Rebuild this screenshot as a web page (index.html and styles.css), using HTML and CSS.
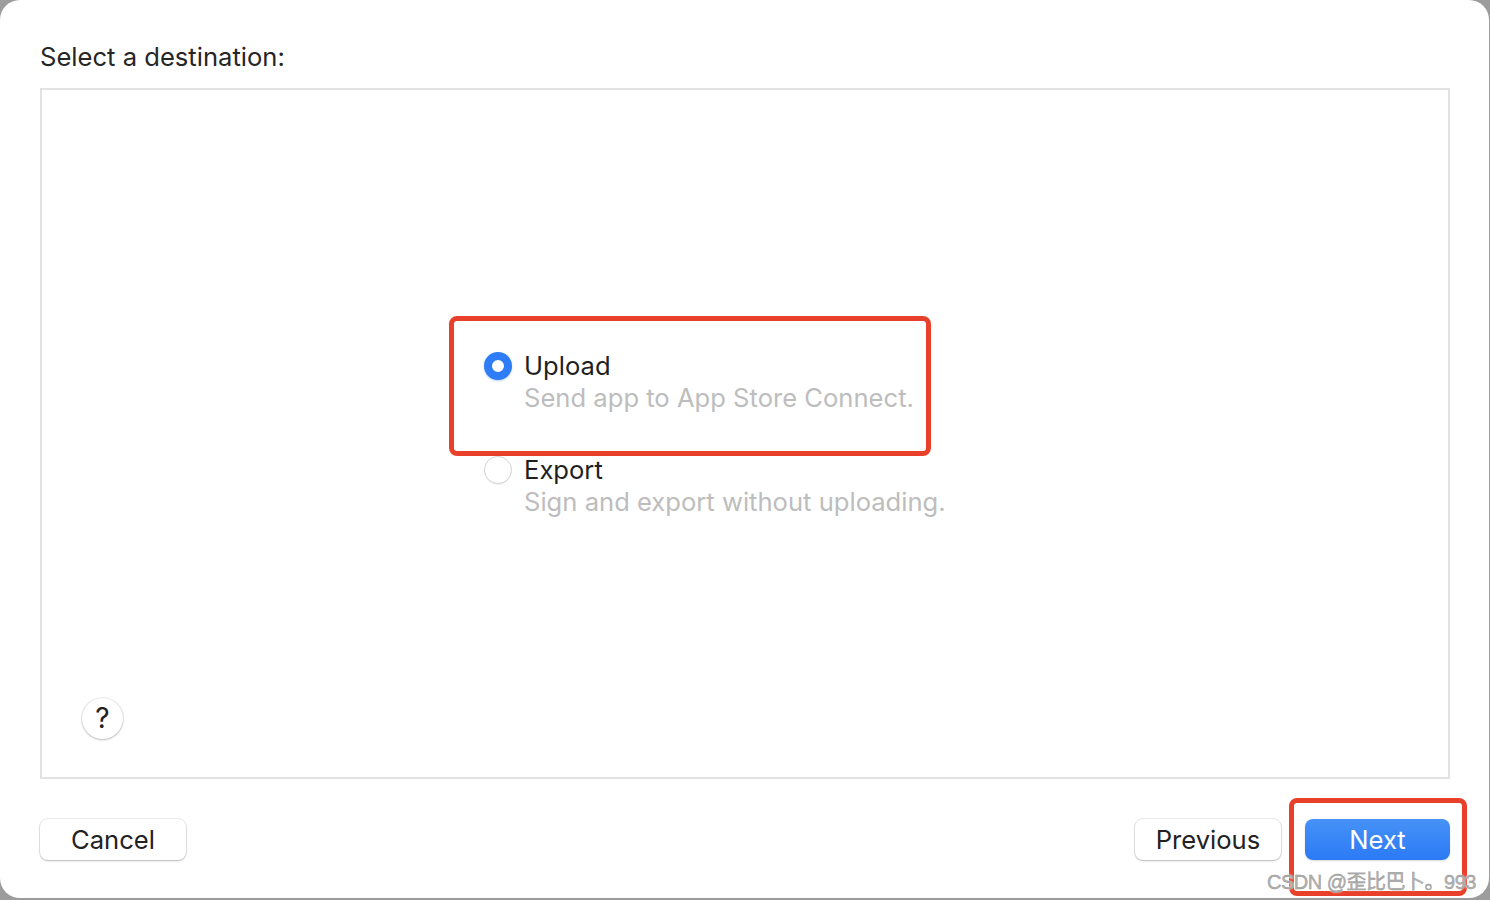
FILE: index.html
```html
<!DOCTYPE html>
<html lang="en">
<head>
<meta charset="utf-8">
<title>Select a destination</title>
<link rel="stylesheet" href="styles.css">
</head>
<body>
<div class="window">
  <h1 class="title">Select a destination:</h1>
  <div class="panel">
    <div class="options">
      <div class="option">
        <span class="radio radio-on"></span>
        <div class="option-text">
          <div class="option-name">Upload</div>
          <div class="option-desc">Send app to App Store Connect.</div>
        </div>
      </div>
      <div class="option">
        <span class="radio"></span>
        <div class="option-text">
          <div class="option-name">Export</div>
          <div class="option-desc">Sign and export without uploading.</div>
        </div>
      </div>
      <div class="mark mark-upload"></div>
    </div>
    <button class="help">?</button>
  </div>
  <div class="footer">
    <button class="btn">Cancel</button>
    <div class="spacer"></div>
    <button class="btn">Previous</button>
    <div class="next-wrap">
      <button class="btn btn-primary">Next</button>
      <div class="mark mark-next"></div>
    </div>
  </div>
  <div class="watermark">CSDN @歪比巴卜。993</div>
</div>
</body>
</html>
```

FILE: styles.css
```css
html, body {
  margin: 0;
  padding: 0;
}
body {
  width: 1490px;
  height: 900px;
  background: #9c9c9c;
  font-family: Inter, "Noto Sans", "Noto Sans CJK SC", sans-serif;
  overflow: hidden;
}
.window {
  position: relative;
  box-sizing: border-box;
  width: 1489px;
  height: 898px;
  background: #ffffff;
  border-radius: 20px;
  padding: 0 40px 0 40px;
  display: flex;
  flex-direction: column;
}
.title {
  margin: 42px 0 0 0;
  height: 46px;
  font-size: 25.6px;
  font-weight: 400;
  color: #262626;
  line-height: 30px;
}
.panel {
  box-sizing: border-box;
  width: 1410px;
  height: 691px;
  border: 2px solid #e2e2e2;
  display: grid;
  grid-template-rows: 1fr auto 1fr;
}
.options {
  grid-row: 2;
  position: relative;
  margin-left: 442px;
  display: flex;
  flex-direction: column;
  gap: 40px;
}
.option {
  display: flex;
  align-items: flex-start;
  gap: 12px;
}
.radio {
  box-sizing: border-box;
  width: 28px;
  height: 28px;
  margin-top: 2px;
  border-radius: 50%;
  border: 1px solid #d4d4d4;
  background: #fff;
  box-shadow: 0 1px 1px rgba(0,0,0,0.06);
  flex: none;
}
.radio-on {
  border: 8.5px solid #2f7df6;
  background: #fff;
  box-shadow: 0 1px 2px rgba(47,125,246,0.35);
}
.option-name {
  font-size: 25.6px;
  line-height: 32px;
  color: #1f1f1f;
}
.option-desc {
  font-size: 25.6px;
  line-height: 32px;
  color: #bdbdbd;
}
.help {
  grid-row: 3;
  align-self: end;
  margin: 0 0 38px 40px;
  width: 41px;
  height: 41px;
  border-radius: 50%;
  border: none;
  background: #fff;
  box-shadow: 0 0 0 1px rgba(0,0,0,0.08), 0 1px 2px rgba(0,0,0,0.22);
  font-family: Inter, sans-serif;
  font-size: 28px;
  color: #222;
  padding: 0;
  line-height: 41px;
}
.footer {
  margin-top: 40px;
  display: flex;
  align-items: center;
  gap: 24px;
  width: 1410px;
}
.spacer {
  flex: 1;
}
.btn {
  box-sizing: border-box;
  width: 146px;
  height: 41px;
  border: none;
  border-radius: 8px;
  background: #fff;
  box-shadow: 0 0 0 1px rgba(0,0,0,0.08), 0 1px 2px rgba(0,0,0,0.22);
  font-family: Inter, sans-serif;
  font-size: 25.6px;
  color: #222;
  padding: 0;
}
.next-wrap {
  position: relative;
}
.btn-primary {
  width: 145px;
  color: #fff;
  background: linear-gradient(#4592f7, #2c7af5);
  box-shadow: 0 1px 2px rgba(0,0,0,0.15);
}
.mark {
  position: absolute;
  box-sizing: border-box;
  border: 5px solid #e8402b;
  border-radius: 8px;
  pointer-events: none;
}
.mark-upload {
  left: -35px;
  top: -34px;
  width: 482px;
  height: 140px;
}
.mark-next {
  left: -16px;
  top: -21px;
  width: 178px;
  height: 98px;
}
.watermark {
  position: absolute;
  left: 1267px;
  top: 866px;
  font-family: "Liberation Sans", "Noto Sans CJK SC", sans-serif;
  font-size: 20px;
  color: #b4b4b4;
  -webkit-text-stroke: 0.4px #8f8f8f;
  text-shadow: 0 0 2px #fff, 0 0 2px #fff;
  white-space: nowrap;
  letter-spacing: -0.5px;
}
```
